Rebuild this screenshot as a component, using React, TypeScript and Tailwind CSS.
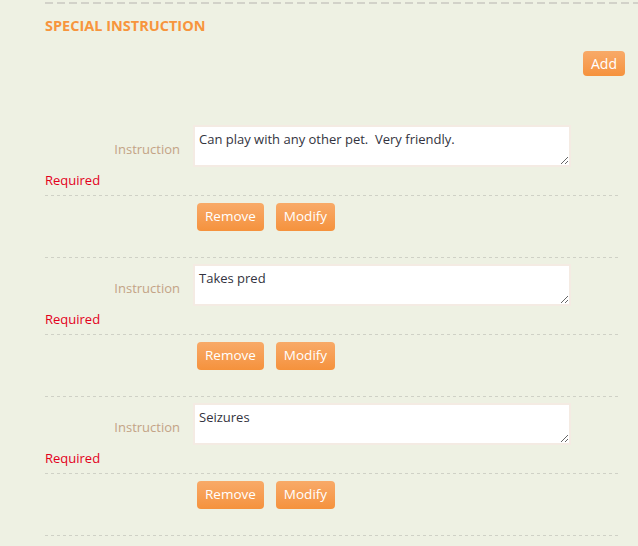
import React from 'react';

interface Instruction {
  id: number;
  text: string;
}

const instructions: Instruction[] = [
  { id: 1, text: 'Can play with any other pet.  Very friendly.' },
  { id: 2, text: 'Takes pred' },
  { id: 3, text: 'Seizures' },
];

const btn =
  'h-[28px] px-[8px] rounded-[4px] bg-gradient-to-b from-[#f8aa68] to-[#f5923c] text-white text-[13.5px] leading-none';

const thinLine =
  'h-px bg-[repeating-linear-gradient(to_right,#cfd1c6_0_3px,transparent_3px_6px)]';

const InstructionRow: React.FC<{ item: Instruction; first: boolean }> = ({ item, first }) => {
  return (
    <div className={first ? 'pt-0' : 'pt-[6px]'}>
      <div className="flex items-start">
        <label className="w-[148px] pr-[13px] pt-[15px] text-right text-[13px] text-[#c3a386]">
          Instruction
        </label>
        <textarea
          defaultValue={item.text}
          className="w-[378px] h-[42px] border-2 border-[#f4ebe3] bg-white px-[4px] pt-[3px] text-[13px] text-[#333340] leading-[18px] outline-none"
        />
      </div>
      <div className="pt-[4px] h-[28px] text-[13px] text-[#e3001b]">Required</div>
      <div className={thinLine} />
      <div className="flex gap-[12px] pl-[152px] pt-[7px] pb-[26px]">
        <button className={btn}>Remove</button>
        <button className={btn}>Modify</button>
      </div>
      <div className={thinLine} />
    </div>
  );
};

const App: React.FC = () => {
  return (
    <div
      className="w-[638px] h-[546px] overflow-hidden bg-[#eef1e3] pl-[45px]"
      style={{ fontFamily: '"Open Sans", "Noto Sans", sans-serif' }}
    >
      <div className="mt-[2px] h-[2px] bg-[repeating-linear-gradient(to_right,#d2d2c9_0_8px,transparent_8px_12px)]" />
      <h2 className="mt-[13px] text-[14.5px] font-bold text-[#f7953d] leading-[18px]">
        SPECIAL INSTRUCTION
      </h2>
      <div className="flex justify-end pr-[13px] mt-[16px]">
        <button className="h-[25px] px-[8px] rounded-[4px] bg-gradient-to-b from-[#f8aa68] to-[#f5923c] text-white text-[14px] leading-none">
          Add
        </button>
      </div>
      <div className="mr-[20px] mt-[49px]">
        {instructions.map((item, i) => (
          <InstructionRow key={item.id} item={item} first={i === 0} />
        ))}
      </div>
    </div>
  );
};

export default App;
